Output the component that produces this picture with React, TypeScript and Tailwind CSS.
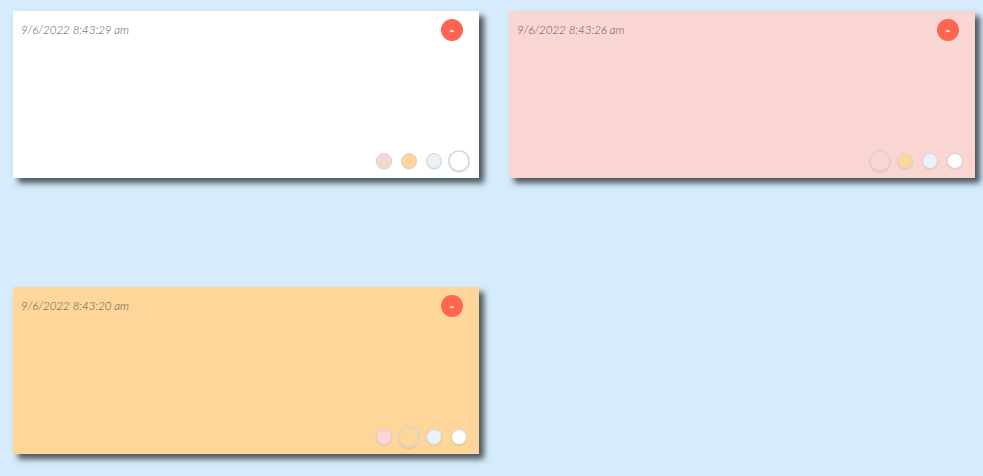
import React from 'react'

const COLORS = ['#fad6d2', '#ffd699', '#e9f2f9', '#ffffff']

type Note = { id: number; date: string; color: number }

const NOTES: Note[] = [
  { id: 1, date: '9/6/2022 8:43:29 am', color: 3 },
  { id: 2, date: '9/6/2022 8:43:26 am', color: 0 },
  { id: 3, date: '9/6/2022 8:43:20 am', color: 1 },
]

function NoteCard({ note }: { note: Note }) {
  return (
    <div
      className="flex h-[167px] w-[466px] flex-col justify-between shadow-[5px_5px_6px_rgba(0,0,0,0.65)]"
      style={{ backgroundColor: COLORS[note.color] }}
    >
      <div className="flex items-center justify-between pl-2 pr-4 pt-2">
        <span className="text-[11.5px] font-light italic text-[#555] [font-family:Lato,'Open_Sans',sans-serif]">
          {note.date}
        </span>
        <button className="flex h-[22px] w-[22px] items-center justify-center rounded-full bg-[#ff6550] text-[13px] font-bold leading-none text-white [font-family:'Liberation_Sans',sans-serif]">
          -
        </button>
      </div>
      <div className="flex justify-end gap-[9px] pb-[9px] pr-[12px]">
        {COLORS.map((c, i) => (
          <span
            key={c}
            className={`h-4 w-4 rounded-full border border-[#d4d4d4] shadow-[0_1px_1px_rgba(0,0,0,0.08)] ${
              i === note.color ? 'scale-[1.35] border-[#cfcfcf]' : ''
            }`}
            style={{ backgroundColor: c }}
          />
        ))}
      </div>
    </div>
  )
}

export default function App() {
  return (
    <div className="min-h-[476px] bg-[#d6ecfc] pl-[13px] pt-[11px]">
      <div className="grid grid-cols-[466px_466px] gap-x-[30px] gap-y-[109px]">
        {NOTES.map((n) => (
          <NoteCard key={n.id} note={n} />
        ))}
      </div>
    </div>
  )
}
